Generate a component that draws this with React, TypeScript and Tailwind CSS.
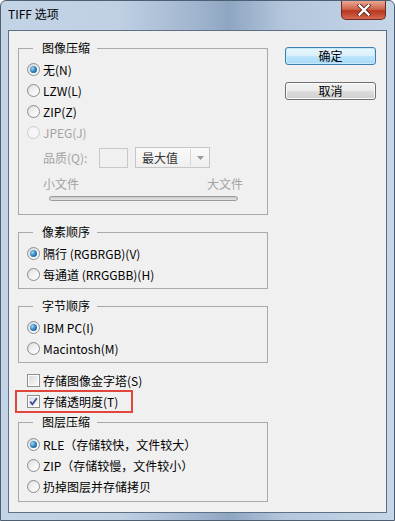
import React from "react";

const FONT = { fontFamily: '"Noto Sans CJK SC", "Noto Sans", sans-serif' };

function Radio({ on = false, disabled = false }: { on?: boolean; disabled?: boolean }) {
  return (
    <div
      className={
        "w-[13px] h-[13px] shrink-0 rounded-full border flex items-center justify-center " +
        (disabled
          ? "border-[#cfcfcf] bg-[#f3f3f3]"
          : "border-[#8e8e8e] bg-[linear-gradient(135deg,#d6d6d6,#f7f7f7_70%,#ffffff)]")
      }
    >
      {on ? (
        <div className="w-[7px] h-[7px] rounded-full bg-[radial-gradient(circle_at_35%_35%,#9ad6f7,#2c7ab8_55%,#0f4f86)]" />
      ) : (
        <div
          className={
            "w-[9px] h-[9px] rounded-full " +
            (disabled ? "bg-[#f6f6f6]" : "bg-[linear-gradient(135deg,#e4e4e4,#ffffff)]")
          }
        />
      )}
    </div>
  );
}

function Check({ on = false }: { on?: boolean }) {
  return (
    <div className="w-[13px] h-[13px] shrink-0 border border-[#8e8e8e] bg-white flex items-center justify-center">
      <div className="w-[9px] h-[9px] bg-[linear-gradient(135deg,#dcdcdc,#f8f8f8)] flex items-center justify-center">
        {on && (
          <svg width="9" height="9" viewBox="0 0 9 9">
            <path d="M1.2 4.6 L3.4 7.2 L7.8 1.2" fill="none" stroke="#3f4fa0" strokeWidth="1.8" />
          </svg>
        )}
      </div>
    </div>
  );
}

function RadioRow({
  label,
  on,
  disabled,
}: {
  label: string;
  on?: boolean;
  disabled?: boolean;
}) {
  return (
    <div className="h-[21px] flex items-center gap-[3px]">
      <Radio on={on} disabled={disabled} />
      <span className={"leading-[16px] " + (disabled ? "text-[#a3a3a3]" : "text-black")}>{label}</span>
    </div>
  );
}

function Group({
  title,
  children,
  className = "",
}: {
  title: string;
  children: React.ReactNode;
  className?: string;
}) {
  return (
    <fieldset className={"border border-[#a9a9a9] " + className}>
      <legend className="ml-[14px] pl-[9px] pr-[7px] leading-[16px] text-black">{title}</legend>
      {children}
    </fieldset>
  );
}

export default function App() {
  return (
    <div
      className="w-[395px] h-[521px] flex flex-col text-[12px] rounded-t-[6px] border border-[#4f5f73] bg-[linear-gradient(90deg,#c4d4e7_0%,#bfd0e4_30%,#9fb4cd_50%,#8fa6c2_58%,#b3c6dc_72%,#c6d6e9_100%)] overflow-hidden"
      style={FONT}
    >
      <div className="h-[29px] flex items-start shrink-0">
        <div className="pl-[7px] pt-[5px] leading-[16px] text-black">TIFF 选项</div>
        <div className="ml-auto mr-[8px] w-[45px] h-[19px] rounded-b-[5px] border border-t-0 border-[#6d2a22] bg-[linear-gradient(#eaa893,#d0644c_45%,#b8361f_55%,#d4694f)] flex items-center justify-center">
          <svg width="14" height="12" viewBox="0 0 14 12">
            <path d="M2.5 1.5 L11.5 10.5 M11.5 1.5 L2.5 10.5" stroke="#5a2118" strokeWidth="4" strokeLinecap="square" />
            <path d="M2.5 1.5 L11.5 10.5 M11.5 1.5 L2.5 10.5" stroke="#ffffff" strokeWidth="2.4" strokeLinecap="square" />
          </svg>
        </div>
      </div>

      <div className="mx-[7px] mb-[7px] flex-1 border border-[#5f6f84] bg-[#f0f0f0] flex">
        <div className="ml-[9px] w-[250px] pt-[9px] flex flex-col">
          <Group title="图像压缩">
            <div className="pl-[8px] pt-[3px]">
              <RadioRow label="无(N)" on />
              <RadioRow label="LZW(L)" />
              <RadioRow label="ZIP(Z)" />
              <RadioRow label="JPEG(J)" disabled />
            </div>
            <div className="pl-[24px] mt-[4px] h-[21px] flex items-center">
              <span className="text-[#a3a3a3] leading-[16px] w-[56px]">品质(Q):</span>
              <div className="w-[29px] h-[20px] border border-[#c9c9c9] bg-[#f0f0f0]" />
              <div className="ml-[7px] w-[75px] h-[21px] border border-[#c6c6c6] bg-[linear-gradient(#fafafa,#efefef)] flex items-center">
                <span className="pl-[6px] flex-1 text-[#333333] leading-[16px]">最大值</span>
                <div className="w-px h-[17px] bg-[#d6d6d6]" />
                <div className="w-[18px] flex items-center justify-center">
                  <svg width="7" height="4" viewBox="0 0 7 4">
                    <path d="M0 0 L7 0 L3.5 4 Z" fill="#9a9a9a" />
                  </svg>
                </div>
              </div>
            </div>
            <div className="pl-[24px] mt-[8px] w-[224px] flex justify-between text-[#a3a3a3] leading-[16px]">
              <span>小文件</span>
              <span>大文件</span>
            </div>
            <div className="ml-[30px] mt-[4px] mb-[13px] w-[189px] h-[5px] rounded-full border border-[#9a9a9a] bg-[linear-gradient(#c9c9c9,#e6e6e6)]" />
          </Group>

          <Group title="像素顺序" className="mt-[9px]">
            <div className="pl-[8px] pt-[3px] pb-[3px]">
              <RadioRow label="隔行 (RGBRGB)(V)" on />
              <RadioRow label="每通道 (RRGGBB)(H)" />
            </div>
          </Group>

          <Group title="字节顺序" className="mt-[9px]">
            <div className="pl-[8px] pt-[3px] pb-[3px]">
              <RadioRow label="IBM PC(I)" on />
              <RadioRow label="Macintosh(M)" />
            </div>
          </Group>

          <div className="mt-[7px] pl-[9px]">
            <div className="h-[21px] flex items-center gap-[3px]">
              <Check />
              <span className="leading-[16px]">存储图像金字塔(S)</span>
            </div>
            <div className="relative h-[21px] flex items-center gap-[3px]">
              <Check on />
              <span className="leading-[16px]">存储透明度(T)</span>
              <div className="absolute left-[-12px] top-[-1px] w-[118px] h-[23px] border-2 border-[#e0463c]" />
            </div>
          </div>

          <Group title="图层压缩" className="mt-[2px]">
            <div className="pl-[8px] pt-[4px] pb-[4px]">
              <RadioRow label="RLE（存储较快，文件较大）" on />
              <RadioRow label="ZIP（存储较慢，文件较小）" />
              <RadioRow label="扔掉图层并存储拷贝" />
            </div>
          </Group>
        </div>

        <div className="ml-[17px] pt-[16px] flex flex-col gap-[17px]">
          <div className="w-[91px] h-[18px] rounded-[3px] border border-[#3c7fb1] bg-[linear-gradient(#eaf6fd,#d9f0fc_50%,#bee6fd_50%,#a7d9f5)] shadow-[inset_0_0_0_1px_#c4e9fb] flex items-center justify-center leading-[16px] text-black">
            确定
          </div>
          <div className="w-[91px] h-[18px] rounded-[3px] border border-[#707070] bg-[linear-gradient(#f2f2f2,#ebebeb_50%,#dddddd_50%,#cfcfcf)] shadow-[inset_0_0_0_1px_#fbfbfb] flex items-center justify-center leading-[16px] text-black">
            取消
          </div>
        </div>
      </div>
    </div>
  );
}
